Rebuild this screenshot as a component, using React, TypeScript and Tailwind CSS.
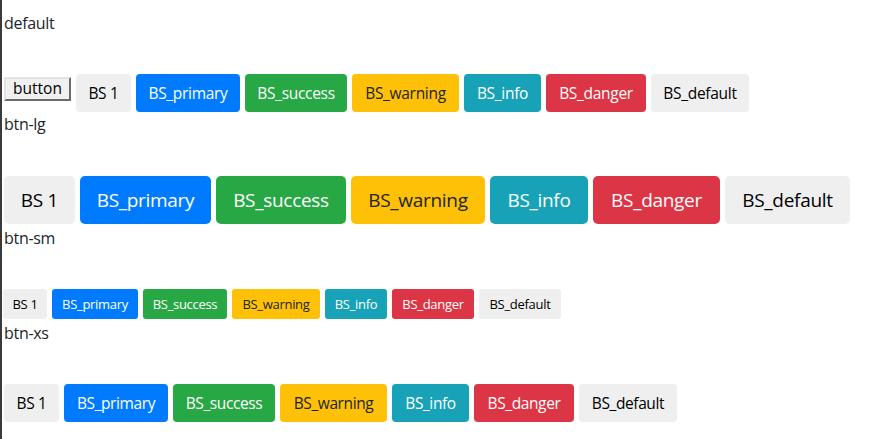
type Btn = { label: string; w: string; cls: string };

const colors = {
  default: "bg-[#efefef] text-black",
  primary: "bg-[#007bff] text-white",
  success: "bg-[#28a745] text-white",
  warning: "bg-[#ffc107] text-[#212529]",
  info: "bg-[#17a2b8] text-white",
  danger: "bg-[#dc3545] text-white",
};

const rowMd: Btn[] = [
  { label: "BS 1", w: "w-[55px]", cls: colors.default },
  { label: "BS_primary", w: "w-[104px]", cls: colors.primary },
  { label: "BS_success", w: "w-[102px]", cls: colors.success },
  { label: "BS_warning", w: "w-[107px]", cls: colors.warning },
  { label: "BS_info", w: "w-[77px]", cls: colors.info },
  { label: "BS_danger", w: "w-[100px]", cls: colors.danger },
  { label: "BS_default", w: "w-[98px]", cls: colors.default },
];

const rowLg: Btn[] = [
  { label: "BS 1", w: "w-[71px]", cls: colors.default },
  { label: "BS_primary", w: "w-[131px]", cls: colors.primary },
  { label: "BS_success", w: "w-[130px]", cls: colors.success },
  { label: "BS_warning", w: "w-[134px]", cls: colors.warning },
  { label: "BS_info", w: "w-[98px]", cls: colors.info },
  { label: "BS_danger", w: "w-[127px]", cls: colors.danger },
  { label: "BS_default", w: "w-[125px]", cls: colors.default },
];

const rowSm: Btn[] = [
  { label: "BS 1", w: "w-[44px]", cls: colors.default },
  { label: "BS_primary", w: "w-[86px]", cls: colors.primary },
  { label: "BS_success", w: "w-[84px]", cls: colors.success },
  { label: "BS_warning", w: "w-[88px]", cls: colors.warning },
  { label: "BS_info", w: "w-[62px]", cls: colors.info },
  { label: "BS_danger", w: "w-[82px]", cls: colors.danger },
  { label: "BS_default", w: "w-[82px]", cls: colors.default },
];

function Row({ items, size }: { items: Btn[]; size: string }) {
  return (
    <>
      {items.map((b, i) => (
        <button
          key={`${i}${b.label}`}
          className={`flex items-center justify-center ${size} ${b.w} ${b.cls}`}
        >
          {b.label}
        </button>
      ))}
    </>
  );
}

export default function App() {
  return (
    <div
      className="min-h-screen border-l-2 border-[#3a3a3a] bg-white pl-[2px] pt-[11px] text-[16px] leading-6 text-[#212529]"
      style={{ fontFamily: '"Open Sans", "Noto Sans", sans-serif' }}
    >
      <div className="h-6 tracking-[-0.3px]">default</div>
      <div className="mt-[39px] flex items-start gap-[5px]">
        <button className="mt-[3px] h-[24px] w-[67px] border-2 border-t-[#e3e3e3] border-l-[#e3e3e3] border-r-[#6b6b6b] border-b-[#6b6b6b] bg-[#f0f0f0] text-[15.5px] leading-none text-black">
          button
        </button>
        <Row items={rowMd} size="h-[38px] rounded text-[15.5px] tracking-[-0.3px]" />
      </div>

      <div className="mt-0 h-6 tracking-[-0.3px]">btn-lg</div>
      <div className="mt-[40px] flex gap-[5px]">
        <Row items={rowLg} size="h-[48px] rounded-[5px] text-[19px] tracking-[-0.3px]" />
      </div>

      <div className="mt-[2px] h-6 tracking-[-0.3px]">btn-sm</div>
      <div className="ml-[-1px] mt-[39px] flex gap-[5px]">
        <Row items={rowSm} size="h-[30px] rounded-[3px] text-[13px] tracking-[-0.3px]" />
      </div>

      <div className="mt-[2px] h-6 tracking-[-0.3px]">btn-xs</div>
      <div className="mt-[39px] flex gap-[5px]">
        <Row items={rowMd} size="h-[38px] rounded text-[15.5px] tracking-[-0.4px]" />
      </div>
    </div>
  );
}
